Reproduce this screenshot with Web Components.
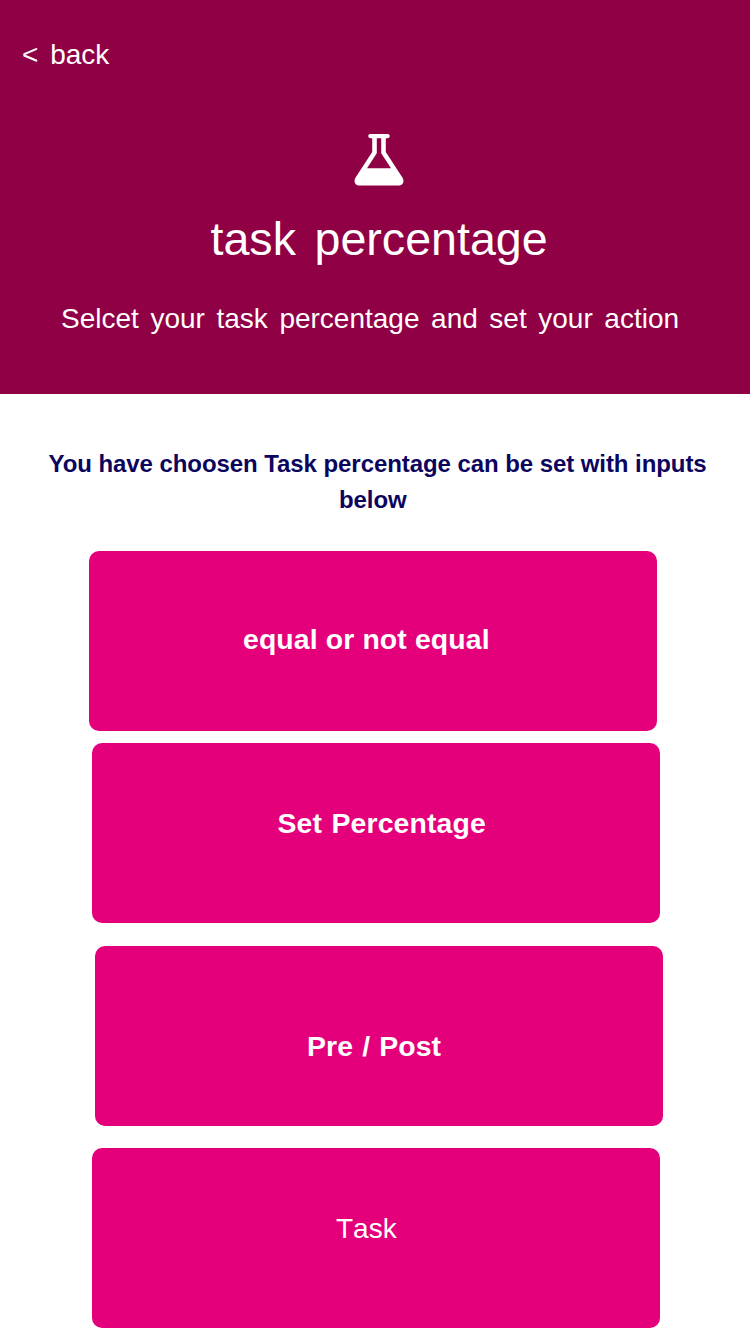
<!DOCTYPE html>
<html lang="en">
<head>
<meta charset="utf-8">
<title>task percentage</title>
<style>
body{margin:0;background:#fff;font-family:"Liberation Sans",Arial,sans-serif}
</style>
</head>
<body>
<task-screen></task-screen>
<script>
const define = (name, html) => customElements.define(name, class extends HTMLElement {
  constructor() {
    super();
    this.attachShadow({mode: 'open'}).innerHTML = html;
  }
});

define('flask-icon', `
<style>:host{display:block;width:50px;height:53px}svg{display:block}</style>
<svg width="50" height="53" viewBox="0 -.7 50 53" aria-hidden="true">
<path fill="#fff" fill-rule="evenodd" d="M16.3 .3H33.7A2.1 2.1 0 0 1 33.7 4.5H31.8V18.2L48.4 43.8C51 48 48.5 51.9 44.5 51.9H5.5C1.5 51.9-1 48 1.6 43.8L18.2 18.2V4.5H16.3A2.1 2.1 0 0 1 16.3 .3ZM22.8 4.5V19.5L13 34.5H37L27.2 19.5V4.5Z"/>
</svg>`);

define('screen-header', `
<style>
:host{display:flex;flex-direction:column;box-sizing:border-box;height:394px;padding-top:39px;background:#8f0045;color:#fff;white-space:nowrap}
.back{align-self:flex-start;margin-left:22px;font-size:28px;line-height:32px;word-spacing:4px}
flask-icon{margin:62px 0 0 354px}
h1{margin:26px 0 0 210.5px;font-weight:400;font-size:46.6px;line-height:54px;word-spacing:5.6px}
p{margin:37px 0 0 61px;font-size:28px;line-height:32px;word-spacing:3.8px}
</style>
<div class="back"><slot name="back"></slot></div>
<flask-icon></flask-icon>
<h1><slot name="title"></slot></h1>
<p><slot name="subtitle"></slot></p>`);

define('screen-intro', `
<style>
:host{display:block;box-sizing:border-box;height:157px;padding:52px 0 0 48.5px;color:#0c055e;font-weight:700;font-size:24px;line-height:36px;letter-spacing:-.07px;white-space:nowrap}
.rest{padding-left:290.5px}
</style>
<div><slot></slot></div><div class="rest"><slot name="rest"></slot></div>`);

define('choice-card', `
<style>
:host{display:block;box-sizing:border-box;width:568px;height:180px;border-radius:10px;background:#e5007b;color:#fff;font-weight:700;font-size:28.4px;line-height:32px;letter-spacing:.12px;white-space:nowrap}
:host([plain]){font-weight:400;font-size:28px;letter-spacing:0;font-kerning:none}
</style>
<slot></slot>`);

define('task-screen', `
<style>
:host{display:block;width:750px;height:1334px;overflow:hidden}
.choices{display:flex;flex-direction:column}
.compare{margin-left:89px;padding:72px 0 0 154px}
.amount{margin:12px 0 0 92px;padding:64px 0 0 185.5px;word-spacing:1.5px}
.phase{margin:23px 0 0 95px;padding:84px 0 0 212px;word-spacing:1px}
.task{margin:22px 0 0 92px;padding:65px 0 0 244px}
</style>
<screen-header>
<span slot="back">&lt; back</span>
<span slot="title">task percentage</span>
<span slot="subtitle">Selcet your task percentage and set your action</span>
</screen-header>
<screen-intro>You have choosen Task percentage can be set with inputs<span slot="rest">below</span></screen-intro>
<div class="choices">
<choice-card class="compare">equal or not equal</choice-card>
<choice-card class="amount">Set Percentage</choice-card>
<choice-card class="phase">Pre / Post</choice-card>
<choice-card class="task" plain>Task</choice-card>
</div>`);
</script>
</body>
</html>
